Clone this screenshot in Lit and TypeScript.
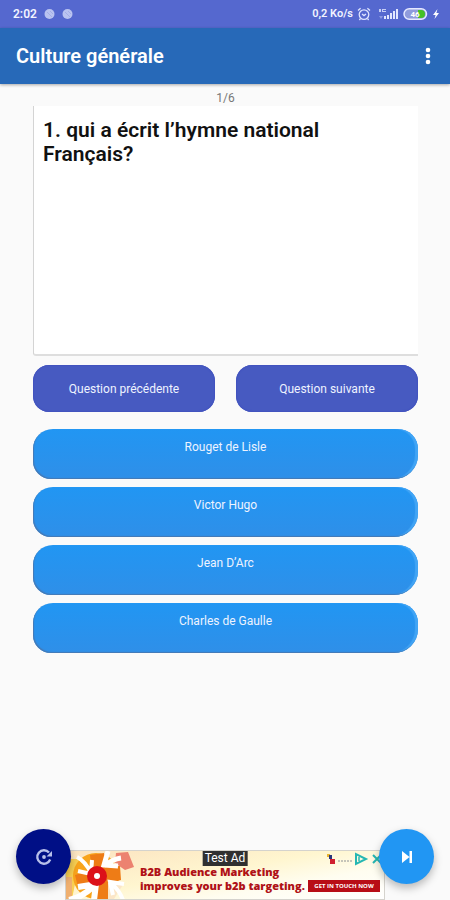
import { LitElement, html, css } from "lit";
import { customElement, state } from "lit/decorators.js";

@customElement("status-bar")
class StatusBar extends LitElement {
  static styles = css`
    :host {
      display: flex;
      align-items: center;
      justify-content: space-between;
      height: 28px;
      padding: 0 10px 0 13px;
      background: #5568cf;
      color: #f1f3ff;
      font: 600 12px/16px Roboto, sans-serif;
    }
    .side {
      display: flex;
      align-items: center;
      gap: 7px;
    }
    .right {
      gap: 2px;
      font-size: 11px;
    }
    .right svg {
      margin-left: 2px;
    }
    .battery-text {
      font: 700 8px Roboto, sans-serif;
    }
  `;
  render() {
    const dot = html`<svg width="11" height="12" viewBox="0 0 11 12" aria-hidden="true">
      <circle cx="5.5" cy="6" r="5" fill="#b9c3f0" />
      <path d="M3 4l5 5M6 3l3 3" stroke="#a3aee6" />
    </svg>`;
    return html`
      <div class="side"><span>2:02</span>${dot}${dot}</div>
      <div class="side right">
        <span>0,2 Ko/s</span>
        <svg width="14" height="14" viewBox="0 0 14 14" fill="none" stroke="#dfe4ff" stroke-width="1.3" aria-hidden="true">
          <circle cx="7" cy="7.6" r="4.8" />
          <path d="M1 3.4L3.6 1.2M13 3.4L10.4 1.2M5 7l2 1.6L9 7M3.4 11.6L2.4 13M10.6 11.6l1 1.4" />
        </svg>
        <svg width="24" height="14" viewBox="0 0 24 14" aria-hidden="true">
          <path d="M4 2h2v3H4zM7 2h4v1H8v1h3v1H7z" fill="#c5cdf5" />
          <path d="M4 9l2 3 2-3z" fill="#8b99e2" />
          <path d="M9 9h2v3H9zM12 8h2v4h-2zM15 6h2v6h-2zM18 4h2v8h-2zM21 2h2v10h-2z" fill="#e1e6ff" />
        </svg>
        <svg width="25" height="14" viewBox="0 0 25 14" role="img" aria-label="Batterie">
          <rect x="1" y="1.7" width="22.5" height="10.6" rx="5.3" fill="#8f9bdc" stroke="#e6e9ff" stroke-width="1.5" />
          <path d="M15 3h3a4 4 0 0 1 0 8h-3z" fill="#45c126" />
          <text class="battery-text" x="12" y="10" text-anchor="middle" fill="#fff">46</text>
        </svg>
        <svg width="8" height="12" viewBox="0 0 8 12" aria-hidden="true">
          <path d="M5.5 1L1 7h2.6L2.5 11 7 5H4.4z" fill="#fff" />
        </svg>
      </div>
    `;
  }
}

@customElement("app-header")
class AppHeader extends LitElement {
  static styles = css`
    :host {
      display: flex;
      align-items: center;
      justify-content: space-between;
      height: 56px;
      padding: 0 10px 0 16px;
      background: #2769b8;
      box-shadow: 0 1px 3px #0005;
    }
    h1 {
      margin: 0;
      color: #fff;
      font: 600 20px/24px Roboto, sans-serif;
    }
    button {
      display: flex;
      padding: 8px;
      border: 0;
      background: none;
      cursor: pointer;
    }
  `;
  render() {
    return html`
      <h1>Culture générale</h1>
      <button aria-label="Plus d'options">
        <svg width="8" height="18" viewBox="0 0 8 18" fill="#fff">
          <circle cx="4" cy="3" r="2.3" />
          <circle cx="4" cy="9" r="2.3" />
          <circle cx="4" cy="15" r="2.3" />
        </svg>
      </button>
    `;
  }
}

@customElement("ad-banner")
class AdBanner extends LitElement {
  static styles = css`
    :host {
      display: block;
      position: relative;
      width: 320px;
      height: 50px;
      box-sizing: border-box;
      border: 1px solid #d5d3cd;
      background: linear-gradient(170deg, #fbe3c0 0%, #fff6d0 45%, #fffdf0 70%, #fff 100%);
      overflow: hidden;
    }
    .layout {
      display: grid;
      grid-template-columns: 74px 1fr;
      height: 100%;
    }
    .copy {
      display: flex;
      flex-direction: column;
      justify-content: flex-end;
      padding-bottom: 6px;
      white-space: nowrap;
    }
    .copy p {
      margin: 0;
      color: #b01217;
      font: 800 11px/14px "Open Sans", sans-serif;
    }
    .row {
      display: flex;
      align-items: center;
      justify-content: space-between;
      padding-right: 4px;
    }
    .cta {
      width: 72px;
      height: 12px;
      background: #b80d16;
      color: #fff;
      font: 700 6px/12px "Open Sans", sans-serif;
      text-align: center;
      text-decoration: none;
    }
    .tag {
      position: absolute;
      top: 0;
      left: 50%;
      transform: translateX(-50%);
      padding: 0 2px;
      background: #303030;
      color: #fff;
      font: 400 12px/15px Roboto, sans-serif;
      white-space: nowrap;
    }
    .marks {
      position: absolute;
      top: 1px;
      right: 0;
    }
  `;
  render() {
    return html`
      <div class="layout">
        <svg width="74" height="48" viewBox="0 0 74 48" aria-hidden="true">
          <path d="M0 8h14L6 48H0z" fill="#f9cf52" />
          <path d="M0 26h6v22H0z" fill="#f0b070" />
          <path d="M50 2l12-1 6 15-9 3-10-7z" fill="#ec8270" />
          <circle cx="30" cy="25" r="23" fill="#f8a41c" />
          <path d="M24 4l14-2 2 14 14-1 1 14-13 3 2 16H29l-3-15-14 3-3-12 17-5z" fill="#ee7c16" />
          <path d="M42 32h16L48 48h-6z" fill="#fbe6c8" />
          <g fill="none" stroke="#fff">
            <path d="M11 6q8 4 14 16M26 9l-1 14-13-3" stroke-width="4" />
            <path d="M55 7q-8 1-17 8M42 0l-4 14 14 1" stroke-width="5" />
            <path d="M3 49q12-2 25-14M12 36l18-3-2 16" stroke-width="6" />
            <path d="M57 49q-3-9-12-17M58 33l-14-2 3 13" stroke-width="4" />
          </g>
          <circle cx="31" cy="25" r="10" fill="#dc1119" />
          <circle cx="31" cy="25" r="3" fill="#fff" />
        </svg>
        <div class="copy">
          <p>B2B Audience Marketing</p>
          <div class="row">
            <p>improves your b2b targeting.</p>
            <a class="cta" href="#">GET IN TOUCH NOW</a>
          </div>
        </div>
      </div>
      <span class="tag">Test Ad</span>
      <svg class="marks" width="58" height="14" viewBox="0 0 58 14" aria-hidden="true">
        <rect x="1" y="2" width="3" height="3" fill="#e8b532" />
        <rect x="3" y="3" width="3" height="4" fill="#29367c" />
        <rect x="4" y="7" width="5" height="5" fill="#d02030" />
        <path d="M12 9h14" stroke="#c6c5ba" stroke-width="2" stroke-dasharray="2 1" />
        <path d="M30 2v10l10-5z" fill="none" stroke="#25b7b3" stroke-width="2" />
        <path d="M33 5v4" stroke="#25b7b3" stroke-width="1.5" />
        <path d="M47 3l8 8M55 3l-8 8" stroke="#25b7b3" stroke-width="2" />
      </svg>
    `;
  }
}

@customElement("app-root")
class AppRoot extends LitElement {
  @state() private answers = ["Rouget de Lisle", "Victor Hugo", "Jean D’Arc", "Charles de Gaulle"];

  static styles = css`
    :host {
      display: flex;
      flex-direction: column;
      min-height: 100vh;
      background: #fafafa;
      font-family: Roboto, sans-serif;
    }
    main {
      flex: 1;
      padding: 6px 32px 24px 33px;
    }
    .counter {
      margin: 0;
      color: #777;
      font-size: 12px;
      line-height: 16px;
      text-align: center;
    }
    .question {
      min-height: 250px;
      box-sizing: border-box;
      padding: 12px 24px 12px 9px;
      border-left: 1px solid #d4d4d4;
      border-bottom: 2px solid #dedede;
      border-bottom-left-radius: 3px;
      background: #fff;
    }
    h2 {
      margin: 0;
      color: #111;
      font-size: 21px;
      font-weight: 600;
      line-height: 24px;
    }
    button {
      font: 400 12px/16px Roboto, sans-serif;
      color: #eef3ff;
      border: 0;
      cursor: pointer;
    }
    .nav {
      display: grid;
      grid-template-columns: 1fr 1fr;
      gap: 21px;
      margin-top: 9px;
    }
    .nav button {
      height: 47px;
      border-radius: 16px;
      background: #475ac1;
      box-shadow: inset 0 0 1px 1px #4253bf;
    }
    .answers {
      display: flex;
      flex-direction: column;
      gap: 8px;
      margin-top: 17px;
    }
    .answers button {
      height: 50px;
      padding: 0 0 14px;
      border-radius: 20px 20px 24px 18px;
      background: linear-gradient(#2196f3, #2f8fe8);
      box-shadow: inset 1px -1px 1px #4679b4, inset -3px 0 1px #42a5f5;
    }
    footer {
      position: relative;
      display: flex;
      justify-content: center;
    }
    .fab {
      position: absolute;
      bottom: 16px;
      display: grid;
      place-items: center;
      width: 55px;
      height: 55px;
      padding: 0;
      border-radius: 50%;
      box-shadow: 0 4px 8px #0004;
    }
    .restart {
      left: 16px;
      background: #000f86;
    }
    .skip {
      right: 16px;
      background: #2196f3;
    }
  `;

  render() {
    return html`
      <status-bar></status-bar>
      <app-header></app-header>
      <main>
        <p class="counter">1/6</p>
        <section class="question"><h2>1. qui a écrit l’hymne national Français?</h2></section>
        <div class="nav">
          <button>Question précédente</button>
          <button>Question suivante</button>
        </div>
        <div class="answers">${this.answers.map((a) => html`<button>${a}</button>`)}</div>
      </main>
      <footer>
        <ad-banner></ad-banner>
        <button class="fab restart" aria-label="Recommencer">
          <svg width="18" height="18" viewBox="0 0 18 18" fill="none" stroke="#b8c0ea" stroke-width="2.4">
            <path d="M14 4.500A6.700 6.700 0 1 0 15.200 11.500" />
            <path d="M17 3v5.500h-5.500z" fill="#b8c0ea" stroke="none" />
            <circle cx="9" cy="9" r="1.900" fill="#b8c0ea" stroke="none" />
          </svg>
        </button>
        <button class="fab skip" aria-label="Passer">
          <svg width="12" height="12" viewBox="0 0 12 12" fill="#fff">
            <path d="M1 0l7.500 6L1 12zM8.500 0h2.500v12H8.500z" />
          </svg>
        </button>
      </footer>
    `;
  }
}
